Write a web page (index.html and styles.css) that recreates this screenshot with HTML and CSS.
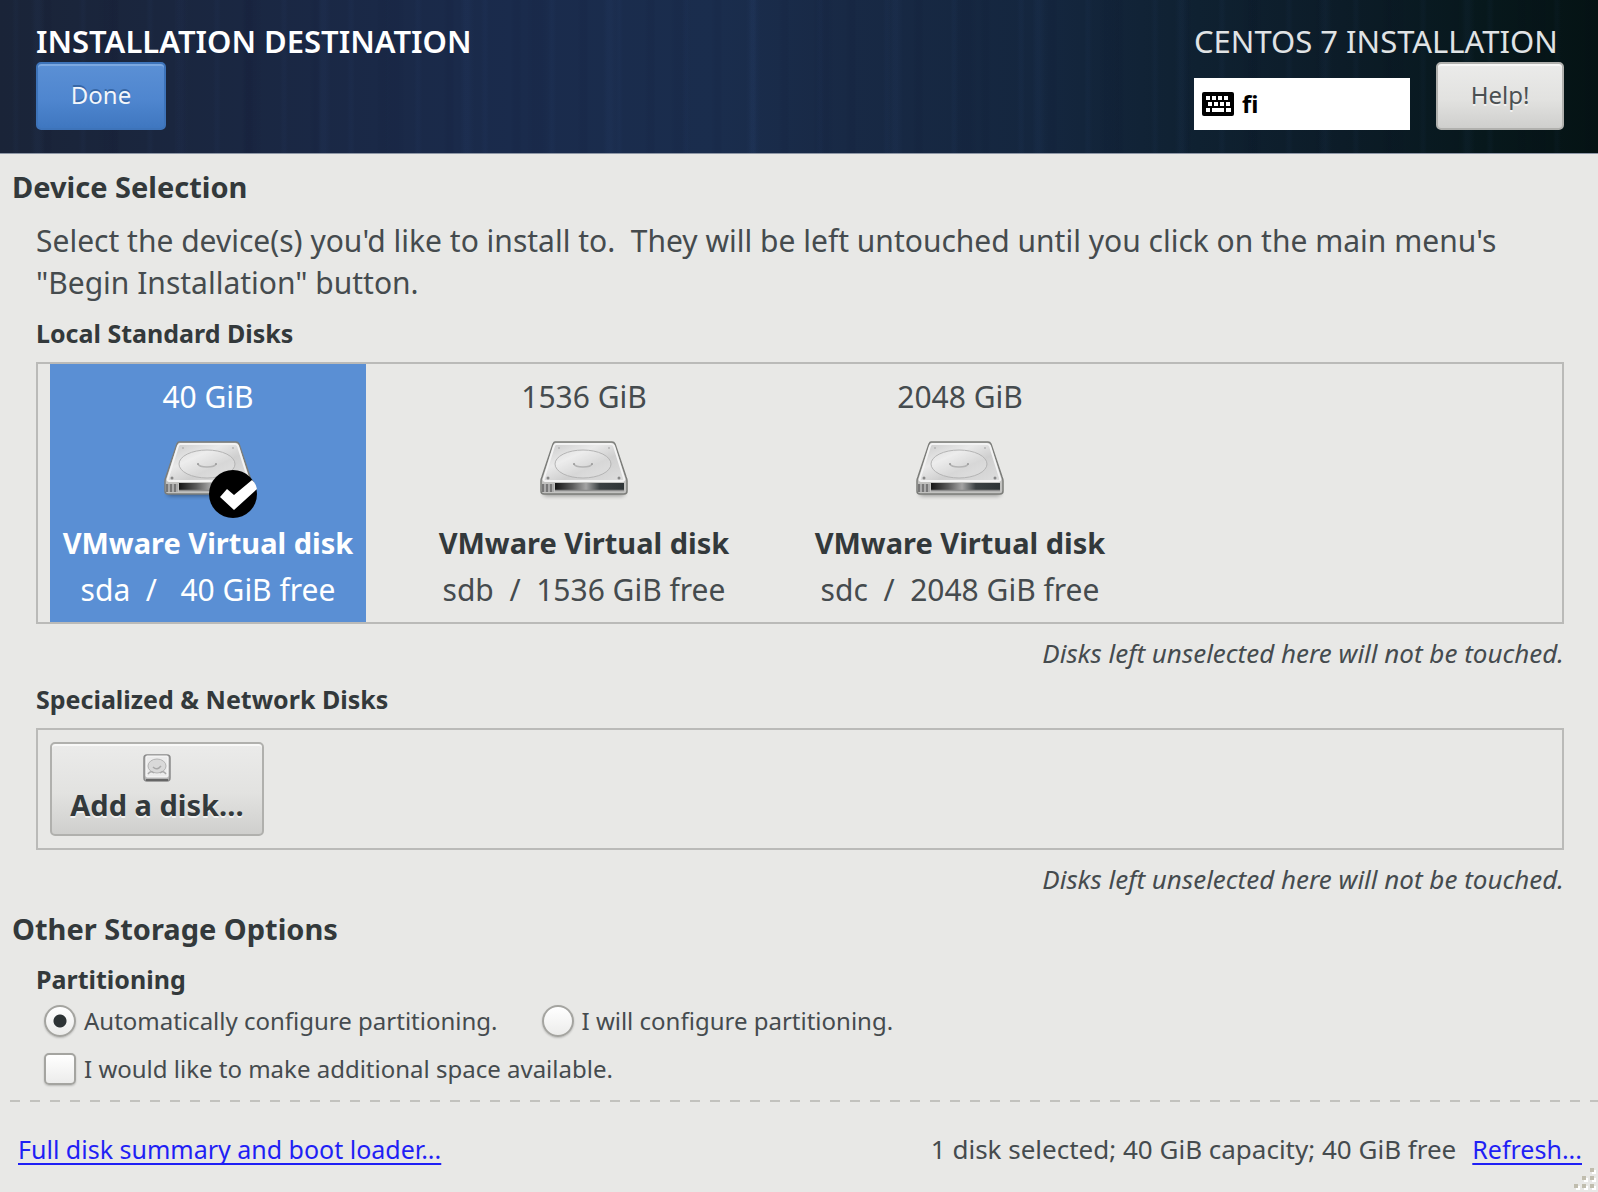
FILE: index.html
```html
<!DOCTYPE html>
<html lang="en">
<head>
<meta charset="utf-8">
<meta name="viewport" content="width=device-width, initial-scale=1">
<title>Installation Destination</title>
<link rel="stylesheet" href="styles.css">
</head>
<body>
<svg class="defs" aria-hidden="true">
  <defs>
    <linearGradient id="plate" x1="0" y1="0" x2="1" y2="1">
      <stop offset="0" stop-color="#c9c9c9"/>
      <stop offset="0.35" stop-color="#e9e9e9"/>
      <stop offset="0.6" stop-color="#cfcfcf"/>
      <stop offset="1" stop-color="#dedede"/>
    </linearGradient>
    <linearGradient id="front" x1="0" y1="0" x2="1" y2="0">
      <stop offset="0" stop-color="#151515"/>
      <stop offset="0.25" stop-color="#5a5a5a"/>
      <stop offset="0.45" stop-color="#a4a4a4"/>
      <stop offset="0.65" stop-color="#3a4042"/>
      <stop offset="1" stop-color="#2e3436"/>
    </linearGradient>
    <filter id="soft" x="-10%" y="-100%" width="120%" height="300%">
      <feGaussianBlur stdDeviation="2"/>
    </filter>
    <symbol id="drive" viewBox="0 0 88 60">
      <rect x="3" y="48" width="82" height="8" rx="4" fill="#000" opacity="0.35" filter="url(#soft)"/>
      <path d="M15 2H72Q74 2 75 4L86 37Q87 39 87 41V51Q87 54 84 54H4Q1 54 1 51V41Q1 39 2 37L13 4Q14 2 15 2Z" fill="#c2c2c0" stroke="#7c7d7a" stroke-width="1.5"/>
      <path d="M16 4H71Q73 4 74 6L84 38Q85 41 82 41H5Q3 41 4 38L14 6Q15 4 16 4Z" fill="url(#plate)" stroke="#f3f3f3" stroke-width="2"/>
      <ellipse cx="43" cy="24" rx="28" ry="14" fill="#fff" fill-opacity="0.18" stroke="#b4b4b4" stroke-width="1"/>
      <path d="M34 24Q35 27 43 27Q51 27 52 24" fill="none" stroke="#b4b4b4" stroke-width="1.5"/>
      <circle cx="34" cy="24" r="1" fill="#999"/>
      <circle cx="52" cy="24" r="1" fill="#999"/>
      <circle cx="19" cy="8" r="1" fill="#b4b4b4"/>
      <circle cx="69" cy="8" r="1" fill="#b4b4b4"/>
      <circle cx="8" cy="38" r="1.5" fill="#888"/>
      <circle cx="79" cy="38" r="1.5" fill="#888"/>
      <rect x="2" y="44" width="12" height="8" fill="#777"/>
      <path d="M5 44V52M9 44V52M13 44V52" stroke="#bdbdbd" stroke-width="1.5"/>
      <rect x="15" y="43" width="69" height="7" fill="url(#front)"/>
      <path d="M15 50.500H84" stroke="#8d8d8d" stroke-width="1.500"/>
    </symbol>
  </defs>
</svg>

<header class="banner">
  <div class="banner-group">
    <h1 class="banner-title">INSTALLATION DESTINATION</h1>
    <button class="btn btn-primary" type="button">Done</button>
  </div>
  <div class="banner-group">
    <p class="banner-product">CENTOS 7 INSTALLATION</p>
    <div class="banner-tools">
      <button class="keyboard" type="button" aria-label="Keyboard layout: fi">
        <svg class="keyboard-icon" viewBox="0 0 32 24" aria-hidden="true">
          <rect width="32" height="24" rx="2" fill="#000"/>
          <path d="M4 4h4v4H4zM10 4h4v4h-4zM16 4h4v4h-4zM22 4h4v4h-4zM6 10h4v4H6zM12 10h4v4h-4zM18 10h4v4h-4zM24 10h4v4h-4zM4 16h4v4H4zM10 16h12v4H10zM24 16h5v4h-5z" fill="#fff"/>
        </svg>
        <span>fi</span>
      </button>
      <button class="btn" type="button">Help!</button>
    </div>
  </div>
</header>

<main class="content">
  <section class="section">
    <h2 class="section-title">Device Selection</h2>
    <div class="section-body">
      <p class="intro">Select the device(s) you'd like to install to.&nbsp; They will be left untouched until you click on the main menu's "Begin Installation" button.</p>
      <h3 class="group-title">Local Standard Disks</h3>
      <div class="frame disks">
        <button class="disk disk-selected" type="button" aria-pressed="true">
          <span>40 GiB</span>
          <svg class="disk-icon" viewBox="0 0 88 60" aria-hidden="true">
            <use href="#drive" width="88" height="60"/>
            <circle cx="69" cy="54" r="24" fill="#000"/>
            <path d="M56 57L63 49L70 55L88 40Q92 43 93 49L70 70Z" fill="#fff"/>
          </svg>
          <span class="disk-name">VMware Virtual disk</span>
          <span class="disk-free">sda  /   40 GiB free</span>
        </button>
        <button class="disk" type="button" aria-pressed="false">
          <span>1536 GiB</span>
          <svg class="disk-icon" viewBox="0 0 88 60" aria-hidden="true"><use href="#drive" width="88" height="60"/></svg>
          <span class="disk-name">VMware Virtual disk</span>
          <span class="disk-free">sdb  /  1536 GiB free</span>
        </button>
        <button class="disk" type="button" aria-pressed="false">
          <span>2048 GiB</span>
          <svg class="disk-icon" viewBox="0 0 88 60" aria-hidden="true"><use href="#drive" width="88" height="60"/></svg>
          <span class="disk-name">VMware Virtual disk</span>
          <span class="disk-free">sdc  /  2048 GiB free</span>
        </button>
      </div>
      <p class="note">Disks left unselected here will not be touched.</p>
      <h3 class="group-title">Specialized &amp; Network Disks</h3>
      <div class="frame special">
        <button class="btn add-disk" type="button">
          <svg class="add-icon" viewBox="0 0 28 28" aria-hidden="true">
            <rect x="1" y="1" width="26" height="26" rx="3" fill="#b5b5b5" stroke="#8b8b8b" stroke-width="1.5"/>
            <rect x="3" y="2" width="22" height="21" rx="1" fill="#ececec" stroke="#fafafa"/>
            <ellipse cx="14" cy="12" rx="9" ry="7" fill="#d9d9d9" stroke="#b4b4b4"/>
            <path d="M10 13Q14 17 18 12M5 20Q8 16 11 19M17 19Q20 16 23 20" fill="none" stroke="#a9a9a9" stroke-width="1.5"/>
            <path d="M3 26H25" stroke="#666" stroke-width="2"/>
          </svg>
          <span>Add a disk…</span>
        </button>
      </div>
      <p class="note">Disks left unselected here will not be touched.</p>
    </div>
  </section>

  <section class="section">
    <h2 class="section-title">Other Storage Options</h2>
    <div class="section-body storage-options">
      <h3 class="group-title">Partitioning</h3>
      <div class="options">
        <div class="option-row">
          <label class="option"><input class="radio" type="radio" name="partitioning" checked>Automatically configure partitioning.</label>
          <label class="option"><input class="radio" type="radio" name="partitioning">I will configure partitioning.</label>
        </div>
        <label class="option"><input class="check" type="checkbox">I would like to make additional space available.</label>
      </div>
    </div>
  </section>
</main>

<footer class="footer">
  <a class="link" href="#summary">Full disk summary and boot loader...</a>
  <div class="status">
    <span>1 disk selected; 40 GiB capacity; 40 GiB free</span>
    <a class="link" href="#refresh">Refresh...</a>
  </div>
  <svg class="grip" viewBox="0 0 24 24" aria-hidden="true">
    <path d="M18 2h4v4h-4zM10 10h4v4h-4zM18 10h4v4h-4zM2 18h4v4H2zM10 18h4v4h-4zM18 18h4v4h-4z" fill="#fff"/>
    <path d="M16 0h4v4h-4zM8 8h4v4H8zM16 8h4v4h-4zM0 16h4v4H0zM8 16h4v4H8zM16 16h4v4h-4z" fill="#c0bdae"/>
  </svg>
</footer>
</body>
</html>
```
FILE: styles.css
```css
*, *::before, *::after {
  box-sizing: border-box;
}

body {
  margin: 0;
  min-height: 100vh;
  display: flex;
  flex-direction: column;
  background: #e8e8e6;
  color: #454b4e;
  font-family: "Noto Sans", "Open Sans", sans-serif;
  font-size: 24px;
  line-height: 34px;
}

h1, h2, h3, p {
  margin: 0;
}

button {
  margin: 0;
  font: inherit;
  color: inherit;
  cursor: pointer;
}

.defs {
  position: absolute;
  width: 0;
  height: 0;
}

/* Banner */
.banner {
  display: flex;
  justify-content: space-between;
  padding: 20px 34px 23px 36px;
  border-bottom: 1px solid #8d96a5;
  background:
    repeating-linear-gradient(90deg, transparent 0 31px, rgba(70, 110, 180, 0.05) 36px 39px, transparent 45px 97px, rgba(0, 0, 30, 0.05) 104px 112px, transparent 120px 143px),
    repeating-linear-gradient(90deg, transparent 0 12px, rgba(60, 100, 170, 0.04) 15px 17px, transparent 20px 41px, rgba(0, 0, 30, 0.05) 46px 50px, transparent 53px 67px),
    linear-gradient(90deg, #1a2438 0%, #1a2845 20%, #1a2b4c 32%, #1a2d4d 45%, #182945 53%, #14263e 66%, #0f2131 75%, #0c1c28 84%, #07181c 93%, #051314 100%);
  color: #fff;
}

.banner-group {
  display: flex;
  flex-direction: column;
  align-items: flex-start;
}

.banner-title,
.banner-product {
  font-size: 31px;
  line-height: 42px;
  font-weight: 600;
}

.banner-product {
  font-weight: 400;
  color: #e0e3e5;
}

.banner-tools {
  display: flex;
  align-items: flex-end;
  gap: 26px;
}

.btn {
  min-width: 128px;
  height: 68px;
  padding: 0 12px 2px;
  border: 2px solid #b0b0ad;
  border-radius: 5px;
  background: linear-gradient(#ebebea, #e2e2e0 55%, #cfcfcd);
  box-shadow: inset 0 2px 0 #f8f8f7;
  color: #4b5052;
  text-shadow: 0 2px 0 #f2f2f1;
}

.btn-primary {
  min-width: 130px;
  border-color: #3d73b9;
  background: linear-gradient(#5b90d5, #4f86cf 55%, #3f77c0);
  box-shadow: inset 0 2px 0 #7ca8e0;
  color: #f2f6fb;
  text-shadow: 0 -2px 0 #3767a6;
}

.keyboard {
  display: flex;
  align-items: center;
  gap: 8px;
  width: 216px;
  height: 52px;
  padding: 0 8px;
  border: 0;
  background: #fff;
  color: #000;
  font-weight: 700;
}

.keyboard-icon {
  width: 32px;
  height: 24px;
}

/* Content */
.content {
  flex: 1;
  display: flex;
  flex-direction: column;
  gap: 12px;
  padding: 12px 34px 12px 12px;
}

.section,
.section-body {
  display: flex;
  flex-direction: column;
  gap: 12px;
}

.section-body {
  padding-left: 24px;
}

.storage-options {
  gap: 8px;
}

.section-title {
  font-size: 29px;
  line-height: 42px;
  color: #33393b;
}

.group-title {
  font-size: 25px;
  line-height: 34px;
  color: #33393b;
}

.intro {
  font-size: 30px;
  line-height: 42px;
}

.frame {
  border: 2px solid #babab8;
}

.disks {
  display: flex;
  gap: 60px;
  padding: 0 12px;
}

.disk {
  display: flex;
  flex-direction: column;
  align-items: center;
  width: 316px;
  padding: 12px 0 11px;
  border: 0;
  background: none;
  font-size: 30px;
  line-height: 42px;
}

.disk-selected {
  background: #5a8fd4;
  color: #fff;
}

.disk-icon {
  width: 88px;
  height: 60px;
  margin: 22px 0;
  overflow: visible;
}

.disk-name {
  font-size: 29px;
  font-weight: 700;
}

.disk:not(.disk-selected) .disk-name {
  color: #33393b;
}

.disk-free {
  margin-top: 5px;
  white-space: pre;
}

.note {
  font-size: 26px;
  font-style: italic;
  text-align: right;
}

.special {
  padding: 12px;
}

.add-disk {
  display: flex;
  flex-direction: column;
  align-items: center;
  min-width: 214px;
  height: 94px;
  padding: 10px 16px 0;
  color: #33393b;
  font-size: 29px;
  font-weight: 700;
  line-height: 46px;
}

.add-icon {
  width: 28px;
  height: 28px;
}

.options {
  display: flex;
  flex-direction: column;
  gap: 14px;
  padding-left: 8px;
}

.option-row {
  display: flex;
  gap: 44px;
}

.option {
  display: flex;
  align-items: center;
  gap: 8px;
}

.radio,
.check {
  appearance: none;
  width: 32px;
  height: 32px;
  margin: 0;
  border: 2px solid #a4a4a0;
  border-radius: 5px;
  background: linear-gradient(#fff, #ececeb);
  box-shadow: 0 1px 2px rgba(0, 0, 0, 0.2);
}

.radio {
  border-radius: 50%;
}

.radio:checked {
  background: radial-gradient(circle, #2e3436 6px, transparent 7px), linear-gradient(#fff, #ececeb);
}

/* Footer */
.footer {
  position: relative;
  display: flex;
  justify-content: space-between;
  padding: 32px 16px 26px 18px;
  background: repeating-linear-gradient(90deg, transparent 0 10px, #c2c2be 10px 20px) top / 100% 2px no-repeat;
  font-size: 25px;
}

.status {
  display: flex;
  gap: 16px;
  font-size: 26px;
}

.link {
  color: #1f1ff5;
  font-size: 25px;
  text-decoration-thickness: 2px;
  text-underline-offset: 4px;
  text-decoration-skip-ink: none;
}

.grip {
  position: absolute;
  right: 0;
  bottom: 0;
  width: 24px;
  height: 24px;
}
```
